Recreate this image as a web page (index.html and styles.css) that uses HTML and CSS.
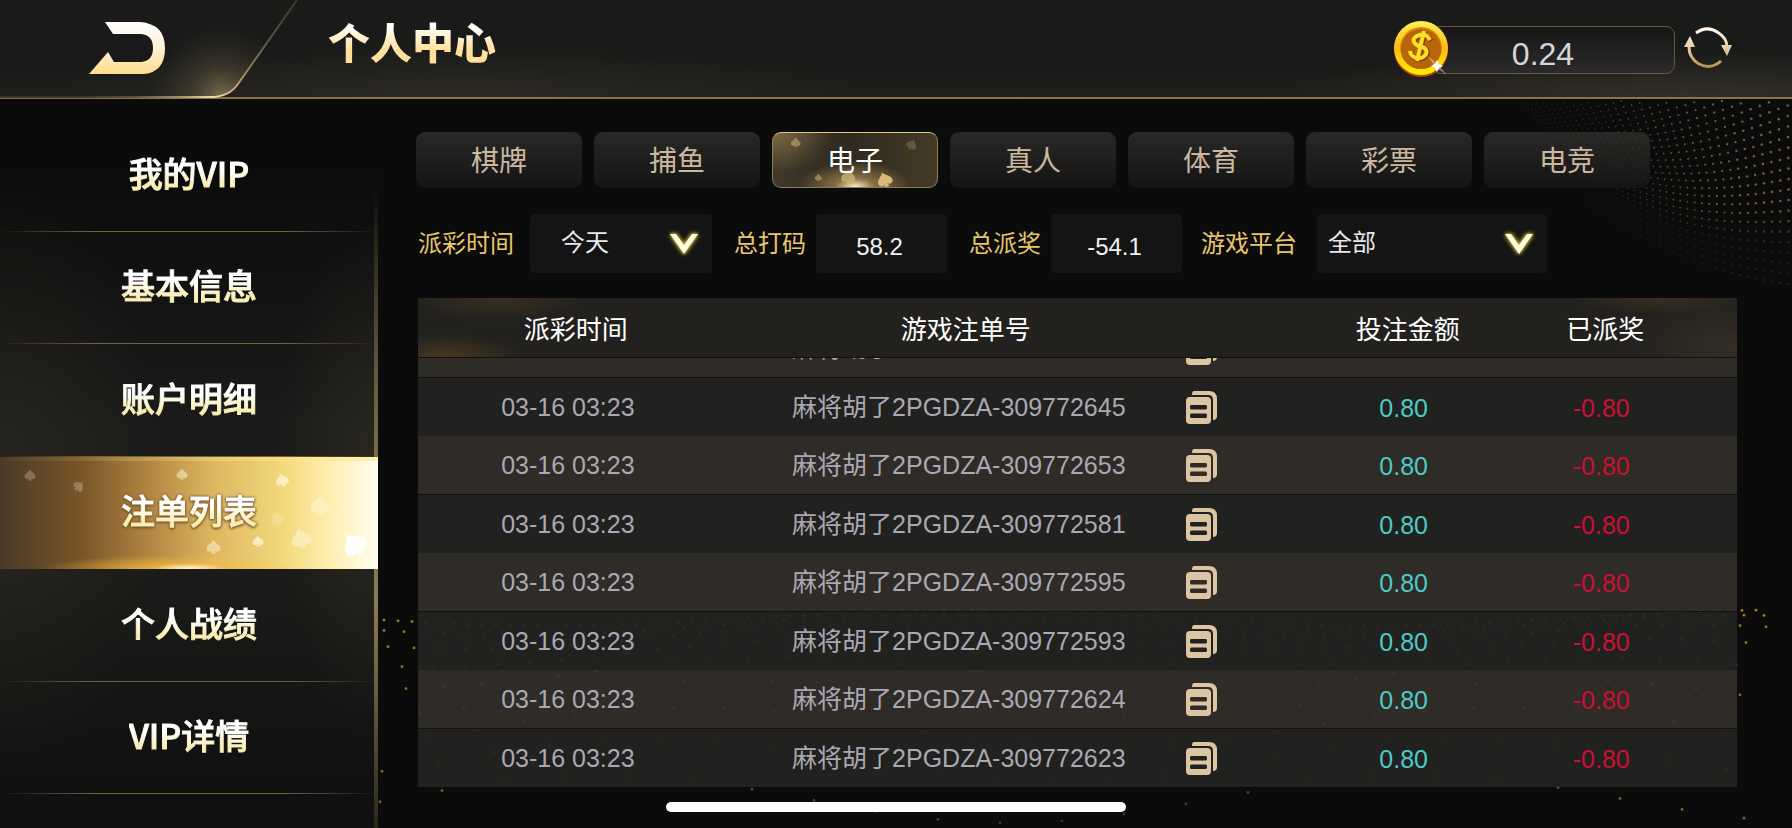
FILE: index.html
```html
<!DOCTYPE html>
<html lang="zh-CN">
<head>
<meta charset="utf-8">
<meta name="viewport" content="width=device-width, initial-scale=1">
<title>个人中心</title>
<link rel="stylesheet" href="styles.css">
</head>
<body class="page">
<svg class="defs" width="0" height="0" aria-hidden="true">
  <defs>
    <linearGradient id="gold" x1="0" y1="0" x2="0" y2="1"><stop offset="0" stop-color="#fff"/><stop offset=".45" stop-color="#fff3df"/><stop offset="1" stop-color="#ffdc8c"/></linearGradient>
    <linearGradient id="bronze" gradientUnits="userSpaceOnUse" x1="0" y1="0" x2="0" y2="42"><stop offset="0" stop-color="#fffaf0"/><stop offset=".5" stop-color="#e6cfa6"/><stop offset="1" stop-color="#b08a4e"/></linearGradient>
    <symbol id="spade" viewBox="0 0 24 24"><path d="M12 1C14 6 23 9 23 15a5 5 0 0 1-9.500 2.500L16 23H8l2.500-5.500A5 5 0 0 1 1 15C1 9 10 6 12 1Z"/></symbol>
    <symbol id="copy" viewBox="0 0 31 33">
      <path d="M8 0H23Q31 0 31 8V25Q31 29 27 29V9Q27 4 22 4H6Q6 0 8 0Z"/>
      <path fill-rule="evenodd" d="M4 6H21Q25 6 25 10V29Q25 33 21 33H4Q0 33 0 29V10Q0 6 4 6ZM5 14Q4 14 4 16Q4 18.500 5 18.500H20Q21 18.500 21 16Q21 14 20 14ZM5 22.500Q4 22.500 4 25Q4 27 5 27H20Q21 27 21 25Q21 22.500 20 22.500Z"/>
    </symbol>
    <symbol id="chevron" viewBox="0 0 28 20"><path d="M0 0H6L14 11L22 0H28L14 20Z"/></symbol>
  </defs>
</svg>

<svg class="dots dots-top" id="dots-top" viewBox="0 0 340 200" aria-hidden="true"></svg>
<svg class="dots dots-bottom" id="dots-bottom" viewBox="0 0 1440 230" preserveAspectRatio="none" aria-hidden="true"></svg>

<header class="topbar">
  <button class="back" type="button" aria-label="返回">
    <svg class="back-frame" viewBox="0 0 300 99" aria-hidden="true">
      <defs>
        <radialGradient id="corner" gradientUnits="userSpaceOnUse" cx="222" cy="98" r="76"><stop offset="0" stop-color="#8f8260" stop-opacity=".8"/><stop offset=".4" stop-color="#665b42" stop-opacity=".4"/><stop offset="1" stop-color="#3c372b" stop-opacity="0"/></radialGradient>
        <radialGradient id="edge" gradientUnits="userSpaceOnUse" cx="214" cy="96" r="130"><stop offset="0" stop-color="#f5dfae"/><stop offset=".25" stop-color="#a8926a"/><stop offset=".6" stop-color="#5e523d"/><stop offset="1" stop-color="#3b352a"/></radialGradient>
      </defs>
      <path d="M0 0H297L238 84Q229 97 211 97H0Z" fill="url(#corner)"/>
      <path d="M297 0L238 84Q229 97 211 97H0" fill="none" stroke="url(#edge)" stroke-width="2"/>
    </svg>
    <svg class="back-icon" viewBox="0 0 76 52" aria-hidden="true"><path fill="url(#gold)" d="M16 0H51Q76 2 76 26Q76 50 55 52H0L19 30L25 40H52Q64 39 64 26Q64 13 52 12H24Z"/></svg>
  </button>
  <h1 class="title">个人中心</h1>
  <div class="wallet">
    <svg class="coin" viewBox="0 0 56 56" aria-hidden="true">
      <defs><linearGradient id="coin-rim" x1="0" y1="0" x2="0" y2="1"><stop offset="0" stop-color="#fff05a"/><stop offset=".5" stop-color="#ffb813"/><stop offset="1" stop-color="#fff000"/></linearGradient></defs>
      <circle cx="28" cy="29" r="27" fill="#b8480a"/>
      <circle cx="28" cy="27" r="27" fill="url(#coin-rim)"/>
      <circle cx="28" cy="27" r="21" fill="#d98a08"/>
      <circle cx="28" cy="28" r="20" fill="#b86408"/>
      <path d="M38 20Q34 13 28 15Q20 17 22 22Q24 26 30 27Q36 29 34 34Q31 39 25 38Q19 37 18 31M32 11L25 41" fill="none" stroke="#8c4305" stroke-width="5"/>
      <path d="M37 19Q33 12 27 14Q19 16 21 21Q23 25 29 26Q35 28 33 33Q30 38 24 37Q18 36 17 30M31 10L24 40" fill="none" stroke="#ffdf2a" stroke-width="4"/>
      <path d="M34 34L46 44L54 54L43 47Z" fill="#fff" opacity=".35"/>
      <path d="M44 39L46 43L50 45L46 47L44 51L42 47L38 45L42 43Z" fill="#fff"/>
    </svg>
    <output class="balance">0.24</output>
    <button class="refresh" type="button" aria-label="刷新">
      <svg class="refresh-icon" viewBox="0 0 48 42" aria-hidden="true">
        <path d="M12 6Q23-2 34 5.500Q43 11 43 20M37 34Q27 43 15 37Q5 31 5 20" fill="none" stroke="url(#bronze)" stroke-width="3"/>
        <path d="M37 18H48L43 29ZM0 20H11L6 9Z" fill="url(#bronze)"/>
      </svg>
    </button>
  </div>
</header>

<div class="body">
  <nav class="sidebar">
    <ul class="menu">
      <li class="menu-item"><a class="menu-link" href="#vip"><span class="menu-text">我的VIP</span></a></li>
      <li class="menu-item"><a class="menu-link" href="#info"><span class="menu-text">基本信息</span></a></li>
      <li class="menu-item"><a class="menu-link" href="#account"><span class="menu-text">账户明细</span></a></li>
      <li class="menu-item"><a class="menu-link menu-link-active" href="#bets" aria-current="page">
        <svg class="spades" viewBox="0 0 378 112" aria-hidden="true" fill="#fff8d8">
          <g opacity=".25"><use href="#spade" x="24" y="12" width="12" height="12"/><use href="#spade" x="73" y="23" width="12" height="12" transform="rotate(45 79 29)"/></g>
          <g opacity=".5"><use href="#spade" x="176" y="11" width="12" height="12"/><use href="#spade" x="206" y="82" width="15" height="15"/><use href="#spade" x="309" y="38" width="22" height="20"/><use href="#spade" x="289" y="70" width="24" height="22" transform="rotate(-15 301 81)"/></g>
          <use href="#spade" x="269" y="54" width="15" height="15" opacity=".25" transform="rotate(-30 276 61)"/>
          <g opacity=".75"><use href="#spade" x="275" y="16" width="14" height="14" transform="rotate(-15 282 23)"/><use href="#spade" x="252" y="78" width="12" height="12"/></g>
          <use href="#spade" x="341" y="74" width="26" height="26" fill="#fff" transform="rotate(-40 354 87)"/>
        </svg>
        <span class="menu-text">注单列表</span></a></li>
      <li class="menu-item"><a class="menu-link" href="#record"><span class="menu-text">个人战绩</span></a></li>
      <li class="menu-item"><a class="menu-link" href="#vip-detail"><span class="menu-text">VIP详情</span></a></li>
    </ul>
  </nav>

  <main class="content">
    <div class="tabs">
      <button class="tab" type="button">棋牌</button>
      <button class="tab" type="button">捕鱼</button>
      <button class="tab tab-active" type="button" aria-pressed="true">
        <svg class="spades" viewBox="0 0 166 56" aria-hidden="true" fill="#d9b97a">
          <g opacity=".5"><use href="#spade" x="16" y="4" width="11" height="11"/><use href="#spade" x="136" y="6" width="12" height="12" opacity=".5" transform="rotate(30 142 12)"/><use href="#spade" x="41" y="42" width="8" height="8"/></g>
          <use href="#spade" x="68" y="37" width="16" height="16" opacity=".7"/><use href="#spade" x="105" y="40" width="17" height="17" transform="rotate(-20 113 48)"/>
        </svg>
        <span class="tab-text">电子</span></button>
      <button class="tab" type="button">真人</button>
      <button class="tab" type="button">体育</button>
      <button class="tab" type="button">彩票</button>
      <button class="tab" type="button">电竞</button>
    </div>

    <form class="filters">
      <div class="filter filter-time">
        <label class="filter-label" for="time">派彩时间</label>
        <div class="picker picker-time">
          <select class="picker-select" id="time"><option>今天</option></select>
          <svg class="picker-arrow" aria-hidden="true"><use href="#chevron"/></svg>
        </div>
      </div>
      <div class="filter">
        <label class="filter-label" for="total-bet">总打码</label>
        <output class="figure" id="total-bet">58.2</output>
      </div>
      <div class="filter">
        <label class="filter-label" for="total-win">总派奖</label>
        <output class="figure" id="total-win">-54.1</output>
      </div>
      <div class="filter filter-platform">
        <label class="filter-label" for="platform">游戏平台</label>
        <div class="picker picker-platform">
          <select class="picker-select" id="platform"><option>全部</option></select>
          <svg class="picker-arrow" aria-hidden="true"><use href="#chevron"/></svg>
        </div>
      </div>
    </form>

    <table class="table table-head">
      <colgroup><col class="col-time"><col class="col-order"><col class="col-copy"><col class="col-bet"><col class="col-win"></colgroup>
      <thead>
        <tr class="head-row"><th>派彩时间</th><th>游戏注单号</th><td></td><th>投注金额</th><th class="last">已派奖</th></tr>
      </thead>
    </table>
    <div class="records" id="records">
      <table class="table">
        <colgroup><col class="col-time"><col class="col-order"><col class="col-copy"><col class="col-bet"><col class="col-win"></colgroup>
        <tbody>
          <tr class="row"><td class="time">03-16 03:23</td><td>麻将胡了2PGDZA-309772640</td><td class="copy-cell"><button class="copy" type="button" aria-label="复制"><svg class="copy-icon"><use href="#copy"/></svg></button></td><td class="bet">0.80</td><td class="win">-0.80</td></tr>
          <tr class="row"><td class="time">03-16 03:23</td><td>麻将胡了2PGDZA-309772645</td><td class="copy-cell"><button class="copy" type="button" aria-label="复制"><svg class="copy-icon"><use href="#copy"/></svg></button></td><td class="bet">0.80</td><td class="win">-0.80</td></tr>
          <tr class="row"><td class="time">03-16 03:23</td><td>麻将胡了2PGDZA-309772653</td><td class="copy-cell"><button class="copy" type="button" aria-label="复制"><svg class="copy-icon"><use href="#copy"/></svg></button></td><td class="bet">0.80</td><td class="win">-0.80</td></tr>
          <tr class="row"><td class="time">03-16 03:23</td><td>麻将胡了2PGDZA-309772581</td><td class="copy-cell"><button class="copy" type="button" aria-label="复制"><svg class="copy-icon"><use href="#copy"/></svg></button></td><td class="bet">0.80</td><td class="win">-0.80</td></tr>
          <tr class="row"><td class="time">03-16 03:23</td><td>麻将胡了2PGDZA-309772595</td><td class="copy-cell"><button class="copy" type="button" aria-label="复制"><svg class="copy-icon"><use href="#copy"/></svg></button></td><td class="bet">0.80</td><td class="win">-0.80</td></tr>
          <tr class="row"><td class="time">03-16 03:23</td><td>麻将胡了2PGDZA-309772593</td><td class="copy-cell"><button class="copy" type="button" aria-label="复制"><svg class="copy-icon"><use href="#copy"/></svg></button></td><td class="bet">0.80</td><td class="win">-0.80</td></tr>
          <tr class="row"><td class="time">03-16 03:23</td><td>麻将胡了2PGDZA-309772624</td><td class="copy-cell"><button class="copy" type="button" aria-label="复制"><svg class="copy-icon"><use href="#copy"/></svg></button></td><td class="bet">0.80</td><td class="win">-0.80</td></tr>
          <tr class="row"><td class="time">03-16 03:23</td><td>麻将胡了2PGDZA-309772623</td><td class="copy-cell"><button class="copy" type="button" aria-label="复制"><svg class="copy-icon"><use href="#copy"/></svg></button></td><td class="bet">0.80</td><td class="win">-0.80</td></tr>
        </tbody>
      </table>
    </div>
  </main>
</div>
<div class="home-bar"></div>
<script src="app.js"></script>
</body>
</html>
```

FILE: styles.css
```css
* { box-sizing: border-box; }

body.page {
  margin: 0;
  height: 100vh;
  display: flex;
  flex-direction: column;
  position: relative;
  overflow: hidden;
  background: #0b0b0b;
  color: #fff;
  font-family: "Liberation Sans", "Noto Sans CJK SC", sans-serif;
}

button, select { font: inherit; color: inherit; border: 0; background: none; padding: 0; margin: 0; cursor: pointer; }
.defs { position: absolute; }

.dots { position: absolute; pointer-events: none; }
.dots-top { top: 99px; right: 0; width: 340px; height: 200px; }
.dots-bottom { bottom: 0; left: 352px; right: 0; width: calc(100% - 352px); height: 230px; }

/* Top bar */
.topbar {
  position: relative;
  flex: none;
  height: 99px;
  display: flex;
  align-items: flex-start;
  background:
    radial-gradient(ellipse 420px 60px at 460px 100%, rgba(70, 64, 50, .35), transparent),
    radial-gradient(ellipse 420px 50px at 94% 100%, rgba(70, 64, 50, .5), transparent),
    linear-gradient(#1b1b1a, #181918 60%, #1f1e1b);
  border-bottom: 2px solid #8a7345;
}
.back { flex: none; width: 300px; height: 99px; display: flex; padding: 22px 0 0 89px; position: relative; }
.back-frame { position: absolute; left: 0; top: 0; width: 300px; height: 99px; }
.back-icon { position: relative; width: 76px; height: 52px; }
.title {
  margin: 0 0 0 28px;
  padding-top: 12px;
  font: 900 42px/58px "Noto Sans CJK SC", sans-serif;
  background: linear-gradient(#fff 36%, #ffe09a 72%);
  -webkit-background-clip: text;
  background-clip: text;
  color: transparent;
}
.wallet { margin-left: auto; padding: 21px 60px 0 0; display: flex; align-items: flex-start; }
.coin { width: 56px; height: 56px; position: relative; z-index: 1; }
.balance {
  width: 244px;
  height: 48px;
  margin: 5px 9px 0 -18px;
  padding: 6px 20px 0 0;
  border: 1px solid #6b5836;
  border-radius: 9px;
  background: linear-gradient(#171717, #2a2a2b);
  font-size: 32px;
  line-height: 42px;
  text-align: center;
  color: #d6d6da;
}
.refresh { width: 48px; height: 42px; margin-top: 6px; }
.refresh-icon { display: block; width: 48px; height: 42px; }

.body { flex: 1; min-height: 0; display: flex; position: relative; }

/* Side menu */
.sidebar {
  position: relative;
  flex: none;
  width: 378px;
  padding-top: 20px;
  background:
    radial-gradient(ellipse 160px 300px at 0 52%, rgba(62, 56, 40, .35), transparent),
    radial-gradient(ellipse 100px 260px at 100% 52%, rgba(62, 56, 40, .45), transparent),
    linear-gradient(#0b0b0b 10%, #1b1b1a 45%, #1b1b19 65%, #101010 95%);
}
.sidebar::after {
  content: "";
  position: absolute;
  top: 90px;
  right: 0;
  bottom: 0;
  width: 4px;
  background: linear-gradient(rgba(125, 110, 70, 0), #756844 38%, #8a7b50 65%, rgba(80, 72, 48, .4));
}
.menu { list-style: none; margin: 0; padding: 0; }
.menu-item {
  height: 112px;
  background: linear-gradient(90deg, transparent, #6e6340 25%, #6e6340 75%, transparent) bottom / 100% 1px no-repeat;
}
.menu-item:nth-child(odd) { height: 113px; }
.menu-link {
  position: relative;
  z-index: 1;
  height: 100%;
  padding-bottom: 6px;
  display: flex;
  align-items: center;
  justify-content: center;
  text-decoration: none;
}
.menu-text {
  position: relative;
  font: 500 34px/50px "Noto Sans CJK SC", sans-serif;
  background: linear-gradient(#fff 40%, #fbeeb4 75%);
  -webkit-background-clip: text;
  background-clip: text;
  color: transparent;
  -webkit-text-stroke: 1px transparent;
}
.menu-link-active {
  background:
    radial-gradient(ellipse 36px 6px at 50% 100%, #fffbd8, rgba(255, 240, 160, 0)),
    radial-gradient(ellipse 130px 14px at 45% 100%, rgba(255, 190, 60, .8), transparent),
    linear-gradient(90deg, rgba(255, 230, 130, 0), rgba(255, 230, 130, .6)) top / 100% 4px no-repeat,
    linear-gradient(90deg, #4a3a27, #7a5528 22%, #b98d46 42%, #deb962 57%, #f3d87c 75%, #fff0b4 88%, #fffdf0);
}
.menu-link-active .menu-text { filter: drop-shadow(0 0 1px #7a5526) drop-shadow(0 1px 1px #7a5526); }
.spades { position: absolute; left: 0; top: 0; width: 100%; height: 100%; }

/* Content */
.content {
  flex: 1;
  min-width: 0;
  display: flex;
  flex-direction: column;
  padding: 33px 55px 41px 40px;
}
.tabs { display: flex; gap: 12px; height: 56px; flex: none; margin-left: -2px; }
.tab {
  position: relative;
  flex: 0 1 166px;
  padding-top: 4px;
  border-radius: 9px;
  overflow: hidden;
  background: linear-gradient(rgba(52, 50, 47, .75), rgba(22, 22, 22, .8));
  font-size: 28px;
  line-height: 40px;
  color: #cbb8a0;
}
.tab-active {
  color: #fff;
  border: 1px solid #8f7b50;
  border-top-color: #ddc68e;
  background:
    radial-gradient(ellipse 56px 26px at 50% 100%, #fff0c8, rgba(190, 155, 90, .6) 35%, transparent),
    radial-gradient(ellipse 60px 40px at 0 0, rgba(150, 128, 78, .7), transparent),
    linear-gradient(90deg, #40382a, #2e2920 45%, #453a27);
}
.tab-text { position: relative; }

.filters { flex: none; display: flex; gap: 22px; height: 59px; margin: 26px 0 25px; }
.filter { display: flex; align-items: center; gap: 10px; }
.filter-time { gap: 16px; }
.filter-platform { gap: 20px; margin-left: -3px; }
.filter-label { font-size: 24px; line-height: 36px; color: #e8c66c; white-space: nowrap; }
.picker { position: relative; height: 59px; border-radius: 4px; background: #141414; }
.picker-time { width: 182px; }
.picker-platform { width: 230px; }
.picker-select { appearance: none; width: 100%; height: 56px; padding-left: 11px; font-size: 24px; outline: 0; color: #e8e8ee; }
.picker-time .picker-select { padding-left: 31px; }
.picker-arrow {
  position: absolute;
  right: 14px;
  top: 20px;
  width: 28px;
  height: 20px;
  fill: #fffbe0;
  pointer-events: none;
  overflow: visible;
  filter: drop-shadow(0 0 2px #b5a52c) drop-shadow(0 0 1px #b5a52c);
}
.figure {
  width: 131px;
  height: 59px;
  padding: 5px 4px 0 0;
  border-radius: 4px;
  background: #141414;
  font-size: 24px;
  line-height: 56px;
  text-align: center;
  color: #f0f0f0;
}

/* Bet records */
.table { width: 100%; table-layout: fixed; border-collapse: separate; border-spacing: 0; text-align: center; }
.table-head {
  flex: none;
  background:
    radial-gradient(ellipse 90px 24px at 6% 0, rgba(90, 70, 36, .4), transparent),
    radial-gradient(ellipse 80px 24px at 2% 100%, rgba(100, 76, 38, .55), transparent),
    radial-gradient(ellipse 120px 50px at 100% 80%, rgba(70, 60, 42, .5), transparent),
    radial-gradient(ellipse 90px 16px at 94% 0, rgba(90, 70, 36, .4), transparent),
    #22211e;
}
.records { flex: 1; min-height: 0; overflow: auto; scrollbar-width: none; }
.col-time { width: 25%; }
.col-order { width: 32%; }
.col-copy { width: 10%; }
.col-bet { width: 15%; }
.col-win { width: 18%; }
.head-row th, .head-row td { height: 60px; padding: 4px 0 0 14px; border-bottom: 1px solid #12110f; font-size: 26px; font-weight: 400; line-height: 40px; }
.head-row th:first-child { padding-right: 28px; }
.head-row .last { padding-right: 40px; }
.row td { height: 58px; padding: 0; font-size: 25px; line-height: 38px; color: #aba7b3; white-space: nowrap; background: rgba(52, 48, 43, .88); }
.row:nth-child(even) td { height: 59px; background: rgba(36, 35, 33, .9); border-top: 1px solid #12110f; }
.row .time { padding-right: 30px; }
.row .copy-cell { text-align: left; padding-left: 16px; }
.row .bet { padding: 2px 0 0 6px; color: #4ccac6; }
.row .win { padding: 2px 34px 0 0; color: #cb1033; }
.copy { display: block; width: 31px; height: 33px; }
.copy-icon { display: block; width: 31px; height: 33px; fill: #dcc5a3; }

.home-bar { position: absolute; left: 50%; bottom: 16px; width: 460px; height: 10px; border-radius: 5px; background: #fff; transform: translateX(-50%); }
```

FILE: app.js
```js
const NS = "http://www.w3.org/2000/svg";

function dot(svg, x, y, r, opacity, color) {
  const c = document.createElementNS(NS, "circle");
  c.setAttribute("cx", x.toFixed(1));
  c.setAttribute("cy", y.toFixed(1));
  c.setAttribute("r", r.toFixed(2));
  c.setAttribute("fill", color);
  c.setAttribute("fill-opacity", Math.max(0, opacity).toFixed(2));
  svg.appendChild(c);
}

// Fan of dotted arcs in the top right corner.
const fan = document.getElementById("dots-top");
for (let row = -6; row <= 22; row++) {
  const left = 25 + row * 3.5;
  const right = -51 + row * 10.8;
  const start = row < 12 ? 70 + Math.max(0, row + 6) * 3.4 : 131;
  for (let k = 0; k < 34; k++) {
    const t = Math.pow(k / 33, 1.3);
    const x = start + t * (345 - start);
    const y = left + (right - left) * t + 16 * Math.sin(Math.PI * t);
    const strength = row > 14 ? Math.max(0.16, 0.8 - (row - 14) * 0.14) : 0.8;
    if (y > 2) dot(fan, x, y, 0.6 + t * 0.8, strength * (0.25 + Math.min(1, t * 1.6) * 0.6), "#a58347");
  }
}

// Wave of scattered dots along the bottom edge.
const wave = document.getElementById("dots-bottom");
for (let row = 0; row < 9; row++) {
  const step = 14 + row * 6;
  for (let x = 4 + row * 3; x < 1415; x += step) {
    const y = 20 + row * row * 2.2 + row * 5 + Math.sin(x / 130 + row * 0.35) * (8 + row * 2);
    const side = Math.abs(x - 720) / 720;
    dot(wave, x + (row % 2) * 5, y, 1.4, 0.45 + side * 0.4 - row * 0.02, "#c8902a");
  }
}

// The list opens with its last rows in view.
const records = document.getElementById("records");
records.scrollTop = records.scrollHeight;
```
